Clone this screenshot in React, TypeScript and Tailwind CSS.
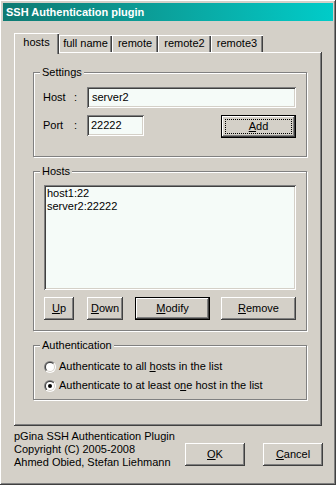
import type { ReactNode } from "react";

const raised =
  "shadow-[inset_-1px_-1px_#404040,inset_1px_1px_#ffffff,inset_-2px_-2px_#808080,inset_2px_2px_#d4d0c8]";
const sunken =
  "shadow-[inset_1px_1px_#808080,inset_-1px_-1px_#ffffff,inset_2px_2px_#404040,inset_-2px_-2px_#d4d0c8]";

const Button = ({
  children,
  className,
  isDefault,
  focused,
}: {
  children: ReactNode;
  className: string;
  isDefault?: boolean;
  focused?: boolean;
}) => (
  <button
    className={`relative flex h-[23px] shrink-0 items-center justify-center bg-[#d4d0c8] ${className} ${
      isDefault ? "border border-black" : ""
    }`}
  >
    <span className={`absolute inset-0 ${raised}`} />
    {focused && <span className="absolute inset-[3px] border border-dotted border-black" />}
    <span className="relative">{children}</span>
  </button>
);

const Group = ({ label, className, children }: { label: string; className: string; children: ReactNode }) => (
  <div
    className={`relative w-[274px] border border-[#808080] shadow-[1px_1px_0_#ffffff,inset_1px_1px_0_#ffffff] ${className}`}
  >
    <span className="absolute -top-[7px] left-[6px] bg-[#d4d0c8] px-[2px] leading-[13px]">{label}</span>
    {children}
  </div>
);

const Radio = ({ checked, children }: { checked?: boolean; children: ReactNode }) => (
  <div className="flex h-[17px] items-center gap-[3px]">
    <svg width="12" height="12" viewBox="0 0 12 12" className="shrink-0">
      <defs>
        <linearGradient id="ro" x1="0" y1="0" x2="1" y2="1">
          <stop offset="0.5" stopColor="#808080" />
          <stop offset="0.5" stopColor="#ffffff" />
        </linearGradient>
        <linearGradient id="ri" x1="0" y1="0" x2="1" y2="1">
          <stop offset="0.5" stopColor="#404040" />
          <stop offset="0.5" stopColor="#d4d0c8" />
        </linearGradient>
      </defs>
      <circle cx="6" cy="6" r="6" fill="url(#ro)" />
      <circle cx="6" cy="6" r="5" fill="url(#ri)" />
      <circle cx="6" cy="6" r="4" fill="#ffffff" />
      {checked && <circle cx="6" cy="6" r="2" fill="#000000" />}
    </svg>
    <span>{children}</span>
  </div>
);

const tabs = [
  { name: "full name", w: "w-[53px]" },
  { name: "remote", w: "w-[46px]" },
  { name: "remote2", w: "w-[53px]" },
  { name: "remote3", w: "w-[52px]" },
];

export default function App() {
  return (
    <div
      className={`flex h-[485px] w-[336px] flex-col bg-[#d4d0c8] p-[3px] font-['Liberation_Sans',Arial,sans-serif] text-[11px] leading-[13px] text-black ${raised}`}
    >
      <div className="flex h-[18px] shrink-0 items-center bg-linear-to-r from-[#0e7a72] to-[#00ccc9] pl-[3px] font-bold text-white">
        SSH Authentication plugin
      </div>

      <div className="ml-[11px] mt-[12px] flex h-[19px] items-end">
        <div className="relative z-10 -mb-[2px] flex h-[21px] w-[45px] items-start justify-center bg-[#d4d0c8] pt-[3px] shadow-[inset_1px_1px_#ffffff,inset_-1px_0_#404040,inset_-2px_0_#808080]">
          hosts
        </div>
        {tabs.map((t) => (
          <div
            key={t.name}
            className={`flex h-[17px] items-center justify-center ${t.w} shadow-[inset_1px_1px_#ffffff,inset_-1px_0_#404040,inset_-2px_0_#808080]`}
          >
            {t.name}
          </div>
        ))}
      </div>

      <div className={`ml-[11px] flex h-[374px] w-[308px] shrink-0 flex-col pl-[19px] ${raised}`}>
        <Group label="Settings" className="mt-[20px] h-[85px] pl-[9px] pt-[14px]">
          <div className="flex h-[21px] items-center">
            <span className="w-[31px]">Host</span>
            <span className="w-[13px]">:</span>
            <div className={`flex h-[21px] w-[209px] items-center bg-[#f5fbf8] pl-[5px] ${sunken}`}>server2</div>
          </div>
          <div className="mt-[7px] flex items-start">
            <div className="flex h-[21px] items-center">
              <span className="w-[31px]">Port</span>
              <span className="w-[13px]">:</span>
              <div className={`flex h-[21px] w-[57px] items-center bg-[#f5fbf8] pl-[4px] ${sunken}`}>22222</div>
            </div>
            <Button className="ml-[77px] w-[75px]" isDefault focused>
              <u>A</u>dd
            </Button>
          </div>
        </Group>

        <Group label="Hosts" className="mt-[14px] h-[160px] pl-[10px] pt-[13px]">
          <div className={`h-[105px] w-[252px] bg-[#f5fbf8] px-[3px] pt-[2px] ${sunken}`}>
            <div>host1:22</div>
            <div>server2:22222</div>
          </div>
          <div className="mt-[7px] flex">
            <Button className="w-[30px]">
              <u>U</u>p
            </Button>
            <Button className="ml-[13px] w-[36px]">
              <u>D</u>own
            </Button>
            <Button className="ml-[12px] w-[75px]" isDefault>
              <u>M</u>odify
            </Button>
            <Button className="ml-[11px] w-[75px]">
              <u>R</u>emove
            </Button>
          </div>
        </Group>

        <Group label="Authentication" className="mt-[14px] h-[55px] pl-[10px] pt-[12px]">
          <div className="flex flex-col gap-[2px]">
            <Radio>
              Authenticate to all <u>h</u>osts in the list
            </Radio>
            <Radio checked>
              Authenticate to at least o<u>n</u>e host in the list
            </Radio>
          </div>
        </Group>
      </div>

      <div className="ml-[11px] flex">
        <div className="mt-[4px] w-[171px]">
          <div>pGina SSH Authentication Plugin</div>
          <div>Copyright (C) 2005-2008</div>
          <div>Ahmed Obied, Stefan Liehmann</div>
        </div>
        <Button className="mt-[17px] w-[60px]">
          <u>O</u>K
        </Button>
        <Button className="ml-[18px] mt-[17px] w-[60px]">
          <u>C</u>ancel
        </Button>
      </div>
    </div>
  );
}
